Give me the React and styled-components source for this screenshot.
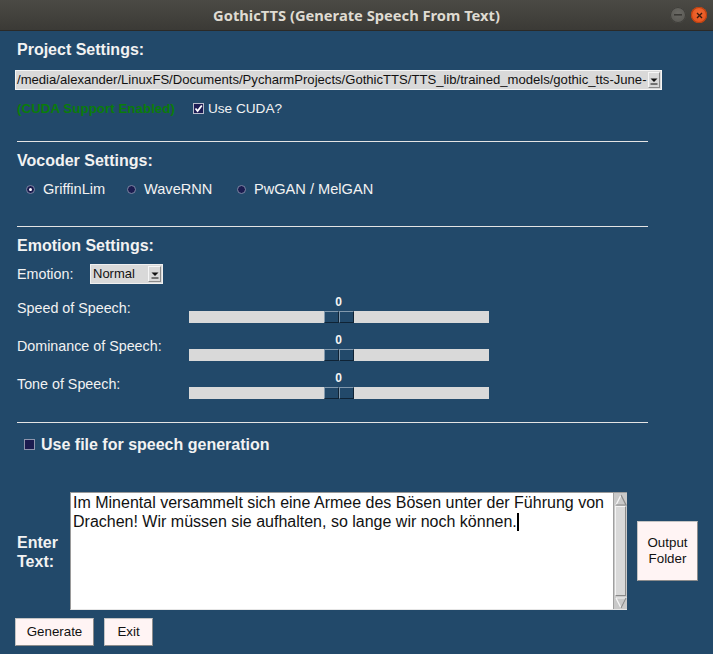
import React from 'react'
import styled, { createGlobalStyle } from 'styled-components'

const GlobalStyle = createGlobalStyle`
  html, body {
    margin: 0;
    padding: 0;
    background: #22496a;
  }
  body {
    font-family: "Liberation Sans", Arial, sans-serif;
  }
`

const Window = styled.div`
  width: 713px;
  height: 654px;
  display: flex;
  flex-direction: column;
  background: #22496a;
  overflow: hidden;
`

const TitleBar = styled.div`
  height: 31px;
  flex: none;
  position: relative;
  display: flex;
  align-items: center;
  justify-content: center;
  background: linear-gradient(#4b4a45, #3b3a36);
  border-bottom: 1px solid #2b2a27;
  box-sizing: border-box;
  color: #dfdbd2;
  font-family: "Noto Sans", "DejaVu Sans", sans-serif;
  font-weight: 700;
  font-size: 14.7px;
`

const WinControls = styled.div`
  position: absolute;
  right: 6px;
  top: 7px;
  display: flex;
  gap: 5px;
`

const WinButton = styled.div`
  width: 16px;
  height: 16px;
  border-radius: 50%;
  display: flex;
  align-items: center;
  justify-content: center;
  background: ${p => (p.$close ? 'radial-gradient(circle at 50% 40%, #f26a33, #df4a16)' : 'radial-gradient(circle at 50% 40%, #6a6964, #55544f)')};
  box-shadow: inset 0 0 0 1px ${p => (p.$close ? '#b8400f' : '#3f3e3a')};
`

const Content = styled.div`
  flex: 1;
  display: flex;
  flex-direction: column;
  padding: 9px 15px 0 15px;
  color: #f2f2f2;
`

const Heading = styled.div`
  font-weight: 700;
  font-size: 16px;
  line-height: 19px;
  padding-left: 2px;
  margin-top: ${p => p.$mt || 0}px;
`

const Separator = styled.div`
  width: 631px;
  height: 1px;
  margin-left: 2px;
  margin-top: ${p => p.$mt}px;
  background: #e4e4e4;
`

const PathCombo = styled.div`
  margin-top: 11px;
  width: 647px;
  height: 20px;
  box-sizing: border-box;
  border: 1px solid #f4f4f4;
  background: #d9d9d9;
  display: flex;
`

const ComboText = styled.div`
  flex: 1;
  overflow: hidden;
  white-space: nowrap;
  font-size: 13.1px;
  line-height: 18px;
  color: #111;
  padding-left: 1px;
`

const ArrowBox = styled.div`
  width: ${p => p.$w || 12}px;
  flex: none;
  box-sizing: border-box;
  margin: 1px;
  border-top: 1px solid #f6f6f6;
  border-left: 1px solid #f6f6f6;
  border-right: 1px solid #8a8a8a;
  border-bottom: 1px solid #8a8a8a;
  background: #d9d9d9;
  display: flex;
  align-items: flex-end;
  justify-content: center;
  padding-bottom: 2px;
`

const CudaRow = styled.div`
  margin-top: 10px;
  height: 16px;
  display: flex;
  align-items: center;
  padding-left: 2px;
`

const CudaNote = styled.span`
  color: #0b7c0b;
  font-weight: 700;
  font-size: 13.4px;
  width: 176px;
`

const CheckBox = styled.span`
  width: 11px;
  height: 11px;
  box-sizing: border-box;
  background: #1d1d55;
  border: 1px solid #b9bccb;
  display: inline-flex;
  align-items: center;
  justify-content: center;
  flex: none;
`

const SmallLabel = styled.span`
  font-size: 13.6px;
  margin-left: 4px;
  color: #f2f2f2;
`

const RadioRow = styled.div`
  margin-top: 11px;
  height: 17px;
  display: flex;
  align-items: center;
  padding-left: 11px;
`

const RadioItem = styled.label`
  width: ${p => p.$w}px;
  display: flex;
  align-items: center;
  gap: 8px;
  font-size: 14.6px;
  line-height: 17px;
`

const RadioDot = styled.span`
  width: 9px;
  height: 9px;
  box-sizing: border-box;
  border-radius: 50%;
  background: #1b1b4f;
  border: 1px solid #7d86a3;
  display: inline-flex;
  align-items: center;
  justify-content: center;
  &::after {
    content: '';
    width: 3px;
    height: 3px;
    border-radius: 50%;
    background: ${p => (p.$on ? '#ffffff' : 'transparent')};
  }
`

const EmotionRow = styled.div`
  margin-top: 9px;
  height: 20px;
  display: flex;
  align-items: center;
`

const RowLabel = styled.span`
  width: ${p => p.$w}px;
  padding-left: 2px;
  box-sizing: border-box;
  font-size: 14.3px;
  line-height: 17px;
  flex: none;
`

const OptionMenu = styled.div`
  width: 73px;
  height: 20px;
  box-sizing: border-box;
  border: 1px solid #f0f0f0;
  background: #d9d9d9;
  display: flex;
  color: #111;
`

const OptionText = styled.span`
  flex: 1;
  font-size: 13px;
  line-height: 18px;
  padding-left: 2px;
`

const SliderRow = styled.div`
  margin-top: ${p => p.$mt}px;
  display: flex;
  align-items: flex-start;
`

const SliderLabel = styled(RowLabel)`
  margin-top: 5px;
`

const SliderBlock = styled.div`
  width: 300px;
  display: flex;
  flex-direction: column;
`

const SliderValue = styled.div`
  text-align: center;
  font-weight: 700;
  font-size: 12px;
  line-height: 14px;
  color: #f4f4f4;
  padding-right: 1px;
`

const Track = styled.div`
  margin-top: 2px;
  height: 12px;
  display: flex;
  background: #d9d9d9;
`

const TrackFill = styled.div`
  flex: 1;
`

const Handle = styled.div`
  width: 30px;
  display: flex;
`

const HandleHalf = styled.div`
  flex: 1;
  box-sizing: border-box;
  background: #22496a;
  border-top: 1px solid #8299ad;
  border-left: 1px solid #8299ad;
  border-right: 1px solid #0f2335;
  border-bottom: 1px solid #0f2335;
`

const FileRow = styled.div`
  margin-top: 12px;
  height: 19px;
  display: flex;
  align-items: center;
  padding-left: 9px;
  gap: 6px;
  font-weight: 700;
  font-size: 16px;
`

const FileBox = styled.span`
  width: 11px;
  height: 11px;
  box-sizing: border-box;
  background: #1b1b4f;
  border: 1px solid #8f95ad;
`

const TextRow = styled.div`
  margin-top: 38px;
  display: flex;
  align-items: center;
`

const EnterLabel = styled.div`
  width: 55px;
  padding-left: 2px;
  padding-top: 2px;
  box-sizing: border-box;
  font-weight: 700;
  font-size: 16px;
  line-height: 19px;
`

const TextBox = styled.div`
  width: 557px;
  height: 118px;
  box-sizing: border-box;
  display: flex;
  border-top: 1px solid #9a9a9a;
  border-left: 1px solid #9a9a9a;
  border-bottom: 1px solid #e6e6e6;
  background: #fff;
`

const TextArea = styled.div`
  flex: 1;
  padding: 0 2px;
  font-size: 16px;
  line-height: 19px;
  color: #111;
`

const Caret = styled.span`
  display: inline-block;
  width: 2px;
  height: 18px;
  background: #000;
  vertical-align: -4px;
`

const ScrollBar = styled.div`
  width: 14px;
  flex: none;
  display: flex;
  flex-direction: column;
  background: #c9c9c9;
  border-left: 1px solid #a0a0a0;
  box-sizing: border-box;
`

const ScrollArrow = styled.div`
  height: 13px;
  flex: none;
  display: flex;
  align-items: center;
  justify-content: center;
`

const ScrollThumb = styled.div`
  flex: 1;
  margin: 0 1px;
  background: #d9d9d9;
  border-top: 1px solid #f4f4f4;
  border-left: 1px solid #f4f4f4;
  border-right: 1px solid #8a8a8a;
  border-bottom: 1px solid #8a8a8a;
`

const TkButton = styled.button`
  width: ${p => p.$w}px;
  height: ${p => p.$h}px;
  padding: 0;
  margin: 0;
  box-sizing: border-box;
  background: #fff4f4;
  border: 1px solid #c4c4c4;
  border-right-color: #8c8c8c;
  border-bottom-color: #8c8c8c;
  font-family: "Liberation Sans", Arial, sans-serif;
  font-size: 13.33px;
  line-height: 16px;
  color: #111;
  flex: none;
`

const SideButton = styled(TkButton)`
  margin-left: 10px;
`

const ButtonRow = styled.div`
  margin-top: 8px;
  display: flex;
  gap: 10px;
`

function DownArrow() {
  return (
    <svg width="8" height="7" viewBox="0 0 8 7">
      <path d="M0.5 0.5 L7.5 0.5 L4 4 Z" fill="#111" />
      <rect x="0.5" y="5.5" width="7" height="1" fill="#111" />
    </svg>
  )
}

function ScrollTriangle({ up }) {
  return (
    <svg width="12" height="12" viewBox="0 0 12 12">
      {up ? (
        <>
          <path d="M1 11 L6 1" stroke="#f6f6f6" strokeWidth="1.2" fill="none" />
          <path d="M6 1 L11 11 L1 11" stroke="#8a8a8a" strokeWidth="1.2" fill="none" />
        </>
      ) : (
        <>
          <path d="M1 1 L11 1 L6 11" stroke="#f6f6f6" strokeWidth="1.2" fill="none" />
          <path d="M6 11 L1 1" stroke="#f6f6f6" strokeWidth="1.2" fill="none" />
          <path d="M11 1 L6 11" stroke="#8a8a8a" strokeWidth="1.2" fill="none" />
        </>
      )}
    </svg>
  )
}

function Slider({ label, mt }) {
  return (
    <SliderRow $mt={mt}>
      <SliderLabel $w={174}>{label}</SliderLabel>
      <SliderBlock>
        <SliderValue>0</SliderValue>
        <Track>
          <TrackFill />
          <Handle>
            <HandleHalf />
            <HandleHalf />
          </Handle>
          <TrackFill />
        </Track>
      </SliderBlock>
    </SliderRow>
  )
}

const vocoders = [
  { name: 'GriffinLim', on: true, w: 101 },
  { name: 'WaveRNN', on: false, w: 110 },
  { name: 'PwGAN / MelGAN', on: false, w: 150 },
]

export default function App() {
  return (
    <Window>
      <GlobalStyle />
      <TitleBar>
        GothicTTS (Generate Speech From Text)
        <WinControls>
          <WinButton>
            <svg width="8" height="2" viewBox="0 0 8 2"><rect width="8" height="1.6" fill="#3a3935" /></svg>
          </WinButton>
          <WinButton $close>
            <svg width="7" height="7" viewBox="0 0 7 7">
              <path d="M1 1 L6 6 M6 1 L1 6" stroke="#3b1a0c" strokeWidth="1.4" />
            </svg>
          </WinButton>
        </WinControls>
      </TitleBar>

      <Content>
        <Heading>Project Settings:</Heading>
        <PathCombo>
          <ComboText>/media/alexander/LinuxFS/Documents/PycharmProjects/GothicTTS/TTS_lib/trained_models/gothic_tts-June-</ComboText>
          <ArrowBox><DownArrow /></ArrowBox>
        </PathCombo>
        <CudaRow>
          <CudaNote>(CUDA Support Enabled)</CudaNote>
          <CheckBox>
            <svg width="9" height="9" viewBox="0 0 9 9">
              <path d="M1.5 4.5 L3.6 7 L7.8 1.5" stroke="#fff" strokeWidth="1.8" fill="none" />
            </svg>
          </CheckBox>
          <SmallLabel>Use CUDA?</SmallLabel>
        </CudaRow>

        <Separator $mt={25} />
        <Heading $mt={9}>Vocoder Settings:</Heading>
        <RadioRow>
          {vocoders.map(v => (
            <RadioItem key={v.name} $w={v.w}>
              <RadioDot $on={v.on} />
              {v.name}
            </RadioItem>
          ))}
        </RadioRow>

        <Separator $mt={28} />
        <Heading $mt={9}>Emotion Settings:</Heading>
        <EmotionRow>
          <RowLabel $w={75}>Emotion:</RowLabel>
          <OptionMenu>
            <OptionText>Normal</OptionText>
            <ArrowBox $w={13}><DownArrow /></ArrowBox>
          </OptionMenu>
        </EmotionRow>
        <Slider label="Speed of Speech:" mt={11} />
        <Slider label="Dominance of Speech:" mt={10} />
        <Slider label="Tone of Speech:" mt={10} />

        <Separator $mt={23} />
        <FileRow>
          <FileBox />
          Use file for speech generation
        </FileRow>

        <TextRow>
          <EnterLabel>Enter Text:</EnterLabel>
          <TextBox>
            <TextArea>
              Im Minental versammelt sich eine Armee des Bösen unter der Führung von Drachen! Wir müssen sie aufhalten, so lange wir noch können.<Caret />
            </TextArea>
            <ScrollBar>
              <ScrollArrow><ScrollTriangle up /></ScrollArrow>
              <ScrollThumb />
              <ScrollArrow><ScrollTriangle /></ScrollArrow>
            </ScrollBar>
          </TextBox>
          <SideButton $w={61} $h={60}>Output<br />Folder</SideButton>
        </TextRow>

        <ButtonRow>
          <TkButton $w={79} $h={28}>Generate</TkButton>
          <TkButton $w={49} $h={28}>Exit</TkButton>
        </ButtonRow>
      </Content>
    </Window>
  )
}
